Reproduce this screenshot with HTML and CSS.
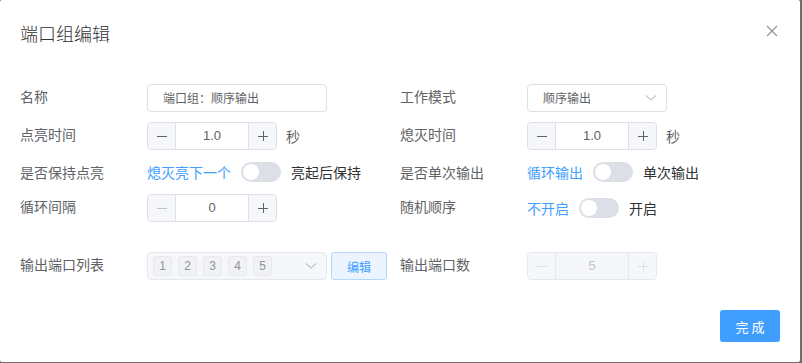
FILE: index.html
```html
<!DOCTYPE html>
<html lang="zh-CN">

<head>
    <meta charset="UTF-8">
    <title>端口组编辑</title>
    <link rel="stylesheet" href="styles.css">
</head>

<body>
    <div class="dialog">
        <div class="dialog-header">
            <span class="dialog-title">端口组编辑</span>
            <button class="close-btn" type="button">
                <svg width="12" height="12" viewBox="0 0 12 12">
                    <path d="M1 1 L11 11 M11 1 L1 11" stroke="#909399" stroke-width="1.2" fill="none" />
                </svg>
            </button>
        </div>

        <div class="dialog-body">
            <div class="form-row">
                <label class="form-label">名称</label>
                <div class="form-content">
                    <div class="text-input wide">端口组：顺序输出</div>
                </div>
                <label class="form-label">工作模式</label>
                <div class="form-content">
                    <div class="text-input select">
                        <span>顺序输出</span>
                        <svg class="arrow" width="12" height="8" viewBox="0 0 12 8">
                            <path d="M1 1.5 L6 6 L11 1.5" stroke="#c0c4cc" stroke-width="1.1" fill="none" />
                        </svg>
                    </div>
                </div>
            </div>

            <div class="form-row">
                <label class="form-label">点亮时间</label>
                <div class="form-content">
                    <div class="number-input">
                        <span class="num-btn"><svg width="12" height="12" viewBox="0 0 12 12"><path d="M1 6.5 H11" /></svg></span>
                        <span class="num-value">1.0</span>
                        <span class="num-btn"><svg width="12" height="12" viewBox="0 0 12 12"><path d="M1 6.5 H11 M6.5 1 V11" /></svg></span>
                    </div>
                    <span class="unit">秒</span>
                </div>
                <label class="form-label">熄灭时间</label>
                <div class="form-content">
                    <div class="number-input">
                        <span class="num-btn"><svg width="12" height="12" viewBox="0 0 12 12"><path d="M1 6.5 H11" /></svg></span>
                        <span class="num-value">1.0</span>
                        <span class="num-btn"><svg width="12" height="12" viewBox="0 0 12 12"><path d="M1 6.5 H11 M6.5 1 V11" /></svg></span>
                    </div>
                    <span class="unit">秒</span>
                </div>
            </div>

            <div class="form-row short">
                <label class="form-label">是否保持点亮</label>
                <div class="form-content">
                    <span class="switch-text active">熄灭亮下一个</span>
                    <span class="switch"><span class="knob"></span></span>
                    <span class="switch-text">亮起后保持</span>
                </div>
                <label class="form-label">是否单次输出</label>
                <div class="form-content">
                    <span class="switch-text active">循环输出</span>
                    <span class="switch"><span class="knob"></span></span>
                    <span class="switch-text">单次输出</span>
                </div>
            </div>

            <div class="form-row">
                <label class="form-label">循环间隔</label>
                <div class="form-content">
                    <div class="number-input">
                        <span class="num-btn muted"><svg width="12" height="12" viewBox="0 0 12 12"><path d="M1 6.5 H11" /></svg></span>
                        <span class="num-value">0</span>
                        <span class="num-btn"><svg width="12" height="12" viewBox="0 0 12 12"><path d="M1 6.5 H11 M6.5 1 V11" /></svg></span>
                    </div>
                </div>
                <label class="form-label">随机顺序</label>
                <div class="form-content">
                    <span class="switch-text active">不开启</span>
                    <span class="switch"><span class="knob"></span></span>
                    <span class="switch-text">开启</span>
                </div>
            </div>

            <div class="form-row spaced">
                <label class="form-label">输出端口列表</label>
                <div class="form-content">
                    <div class="text-input wide select disabled">
                        <span class="tags">
                            <span class="tag">1</span>
                            <span class="tag">2</span>
                            <span class="tag">3</span>
                            <span class="tag">4</span>
                            <span class="tag">5</span>
                        </span>
                        <svg class="arrow" width="12" height="8" viewBox="0 0 12 8">
                            <path d="M1 1.5 L6 6 L11 1.5" stroke="#c0c4cc" stroke-width="1.1" fill="none" />
                        </svg>
                    </div>
                    <button class="plain-btn" type="button">编辑</button>
                </div>
                <label class="form-label">输出端口数</label>
                <div class="form-content">
                    <div class="number-input disabled">
                        <span class="num-btn"><svg width="12" height="12" viewBox="0 0 12 12"><path d="M1 6.5 H11" /></svg></span>
                        <span class="num-value">5</span>
                        <span class="num-btn"><svg width="12" height="12" viewBox="0 0 12 12"><path d="M1 6.5 H11 M6.5 1 V11" /></svg></span>
                    </div>
                </div>
            </div>
        </div>

        <div class="dialog-footer">
            <button class="primary-btn" type="button">完成</button>
        </div>
    </div>
</body>

</html>
```

FILE: styles.css
```css
* {
    box-sizing: border-box;
}

body {
    margin: 0;
    padding: 0;
    background-color: #6e6e6e;
    font-family: "Noto Sans CJK SC", "Liberation Sans", sans-serif;
    color: #606266;
}

.dialog {
    width: 800px;
    height: 362px;
    background-color: #fff;
    border-radius: 2px;
    display: flex;
    flex-direction: column;
}

.dialog-header {
    display: flex;
    justify-content: space-between;
    align-items: center;
    padding: 20px 22px 10px 20px;
    height: 56px;
}

.dialog-title {
    font-size: 18px;
    line-height: 26px;
    color: #303133;
    font-weight: 300;
}

.close-btn {
    border: none;
    background: none;
    padding: 0;
    width: 12px;
    height: 12px;
    display: flex;
    margin-top: -4px;
}

.dialog-body {
    padding: 28px 20px 0 20px;
}

.form-row {
    display: grid;
    grid-template-columns: 127px 253px 127px 1fr;
    height: 28px;
    margin-bottom: 10px;
}

.form-row.short {
    height: 24px;
}

.form-row.spaced {
    margin-top: 30px;
}

.form-label {
    font-size: 14px;
    line-height: 24px;
    color: #606266;
}

.form-content {
    display: flex;
    align-items: center;
}

.text-input {
    height: 28px;
    width: 140px;
    border: 1px solid #dcdfe6;
    border-radius: 4px;
    padding: 0 15px;
    font-size: 12px;
    line-height: 26px;
    color: #606266;
    display: flex;
    align-items: center;
    justify-content: space-between;
}

.text-input.wide {
    width: 180px;
}

.text-input.select {
    padding-right: 9px;
}

.text-input.disabled {
    background-color: #f5f7fa;
    border-color: #e4e7ed;
    padding-left: 5px;
}

.arrow {
    display: block;
}

.tags {
    display: flex;
    gap: 6px;
}

.tag {
    width: 19px;
    height: 20px;
    border: 1px solid #e9e9eb;
    background-color: #f0f2f5;
    border-radius: 3px;
    font-size: 12px;
    line-height: 18px;
    text-align: center;
    color: #909399;
    font-family: "Liberation Sans", sans-serif;
}

.number-input {
    width: 130px;
    height: 28px;
    border: 1px solid #dcdfe6;
    border-radius: 4px;
    display: flex;
    overflow: hidden;
}

.num-btn {
    width: 28px;
    background-color: #f5f7fa;
    display: flex;
    align-items: center;
    justify-content: center;
    stroke: #606266;
    stroke-width: 1;
    fill: none;
}

.num-btn:first-child {
    border-right: 1px solid #dcdfe6;
}

.num-btn:last-child {
    border-left: 1px solid #dcdfe6;
}

.num-btn.muted {
    stroke: #c0c4cc;
}

.num-value {
    flex: 1;
    text-align: center;
    font-size: 13px;
    line-height: 26px;
    color: #606266;
    font-family: "Liberation Sans", sans-serif;
}

.number-input.disabled {
    background-color: #f5f7fa;
    border-color: #e4e7ed;
}

.number-input.disabled .num-btn {
    stroke: #dcdfe6;
    border-color: #e4e7ed;
}

.number-input.disabled .num-value {
    color: #c0c4cc;
}

.unit {
    margin-left: 9px;
    font-size: 14px;
    color: #606266;
}

.switch-text {
    font-size: 14px;
    line-height: 24px;
    color: #303133;
}

.switch-text.active {
    color: #409eff;
}

.switch {
    width: 40px;
    height: 20px;
    border-radius: 10px;
    background-color: #dcdfe6;
    margin: 0 10px;
    position: relative;
    display: inline-block;
}

.knob {
    position: absolute;
    top: 2px;
    left: 2px;
    width: 16px;
    height: 16px;
    border-radius: 50%;
    background-color: #fff;
}

.plain-btn {
    margin-left: 4px;
    width: 56px;
    height: 28px;
    border: 1px solid #b3d8ff;
    background-color: #ecf5ff;
    color: #409eff;
    border-radius: 3px;
    font-size: 12px;
    font-family: "Noto Sans CJK SC", sans-serif;
    padding: 0;
}

.dialog-footer {
    margin-top: auto;
    padding: 0 20px 20px 0;
    display: flex;
    justify-content: flex-end;
}

.primary-btn {
    width: 60px;
    height: 32px;
    border: none;
    border-radius: 3px;
    background-color: #409eff;
    color: #fff;
    font-size: 13px;
    letter-spacing: 3px;
    padding: 0 0 0 3px;
    font-family: "Noto Sans CJK SC", sans-serif;
}
```
